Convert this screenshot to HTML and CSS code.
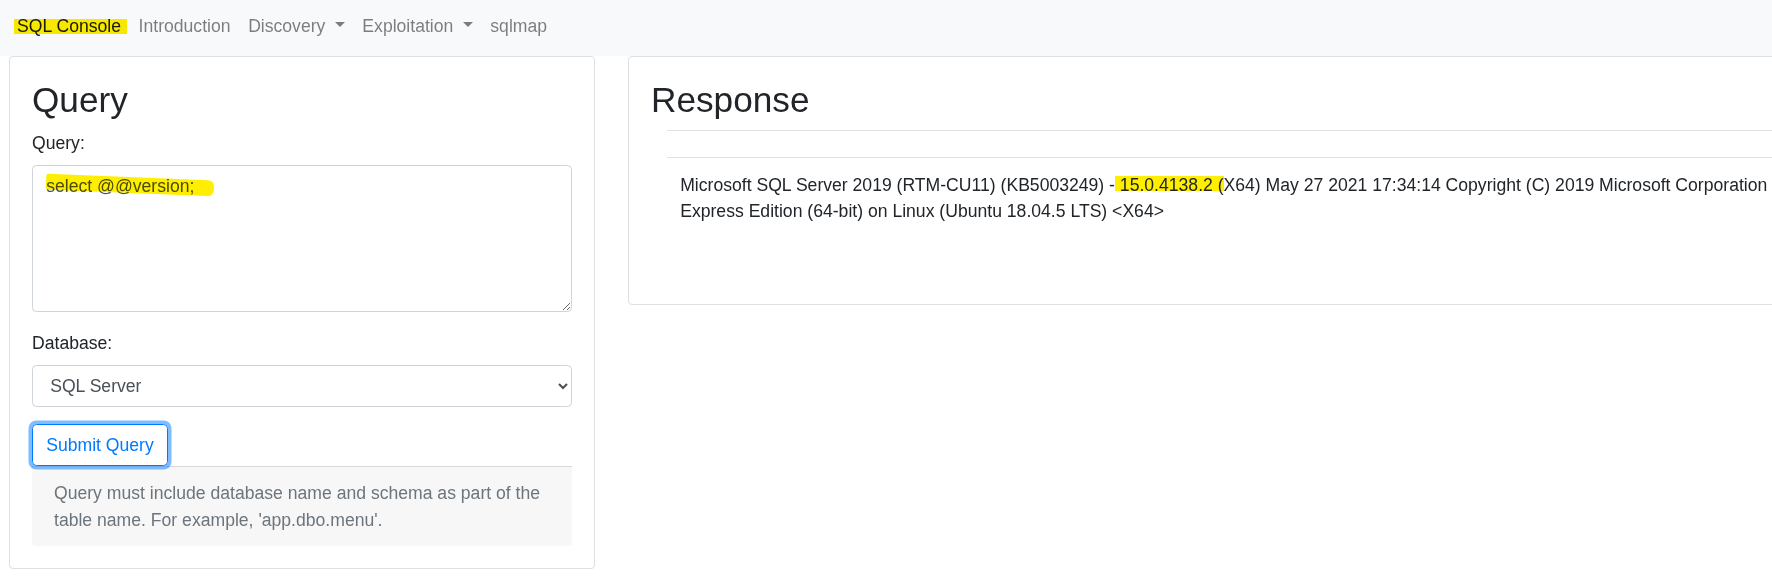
FILE: index.html
```html
<!DOCTYPE html>
<html lang="en">
<head>
<meta charset="utf-8">
<title>SQL Console</title>
<link rel="stylesheet" href="styles.css">
</head>
<body>
<nav class="navbar">
  <ul class="nav">
    <li><a class="nav-link active" href="#"><span class="mark mark-nav">SQL Console</span></a></li>
    <li><a class="nav-link" href="#">Introduction</a></li>
    <li><a class="nav-link dropdown" href="#">Discovery</a></li>
    <li><a class="nav-link dropdown" href="#">Exploitation</a></li>
    <li><a class="nav-link" href="#">sqlmap</a></li>
  </ul>
</nav>
<main class="row">
  <section class="card card-query">
    <h2>Query</h2>
    <div class="form-group">
      <label for="q">Query:</label>
      <div class="textarea-wrap">
        <textarea id="q" class="form-control textarea" rows="5">select @@version;</textarea>
        <span class="marker-stroke"></span>
      </div>
    </div>
    <div class="form-group">
      <label for="db">Database:</label>
      <select id="db" class="form-control select">
        <option>SQL Server</option>
        <option>MySQL</option>
        <option>PostgreSQL</option>
        <option>Oracle</option>
      </select>
    </div>
    <button class="btn" type="button">Submit Query</button>
    <div class="note">Query must include database name and schema as part of the table name. For example, 'app.dbo.menu'.</div>
  </section>
  <section class="card card-response">
    <h2>Response</h2>
    <div class="table-wrap">
      <table class="resp-table">
        <thead><tr><th></th></tr></thead>
        <tbody>
          <tr><td>Microsoft SQL Server 2019 (RTM-CU11) (KB5003249) -<span class="mark mark-resp"> 15.0.4138.2 (</span>X64) May 27 2021 17:34:14 Copyright (C) 2019 Microsoft Corporation Express Edition (64-bit) on Linux (Ubuntu 18.04.5 LTS) &lt;X64&gt;</td></tr>
        </tbody>
      </table>
    </div>
  </section>
</main>
</body>
</html>
```

FILE: styles.css
```css
* {
  box-sizing: border-box;
}

html,
body {
  margin: 0;
  overflow: hidden;
}

body {
  font-family: "Liberation Sans", Arial, Helvetica, sans-serif;
  font-size: 17.6px;
  line-height: 26.4px;
  color: #212529;
  background: #fff;
}

/* ---------- navbar ---------- */
.navbar {
  height: 56px;
  background: #f8f9fa;
  padding: 4.2px 0 0 8.2px;
}

.nav {
  display: flex;
  list-style: none;
  margin: 0;
  padding: 0;
}

.nav-link {
  display: block;
  padding: 8.8px;
  color: rgba(0, 0, 0, 0.5);
  text-decoration: none;
}

.nav-link.active {
  color: rgba(0, 0, 0, 0.9);
}

.dropdown::after {
  content: "";
  display: inline-block;
  margin-left: 9.4px;
  vertical-align: 4.5px;
  border-top: 5.28px solid;
  border-right: 5.28px solid transparent;
  border-left: 5.28px solid transparent;
  border-bottom: 0;
}

.mark {
  mix-blend-mode: multiply;
}

.mark-nav {
  margin-left: -3px;
  padding: 0 6px 0 3px;
  margin-right: -6px;
  background: linear-gradient(transparent 14%, #ffee00 14%, #ffee00 92%, transparent 92%);
}

.mark-resp {
  background: linear-gradient(transparent 6%, #ffee00 6%, #ffee00 78%, transparent 78%);
}

/* ---------- layout ---------- */
.row {
  display: flex;
  align-items: flex-start;
  gap: 33px;
  padding-left: 9px;
}

.card {
  flex: none;
  border: 1px solid rgba(0, 0, 0, 0.125);
  border-radius: 4.4px;
  padding: 22px;
  background: #fff;
}

.card-query {
  width: 586px;
}

.card-response {
  width: 1205px;
}

h2 {
  font-size: 35.2px;
  font-weight: 500;
  line-height: 1.2;
  margin: 0 0 8.8px;
}

/* ---------- form ---------- */
.form-group {
  margin-bottom: 17.6px;
}

label {
  display: block;
  margin-bottom: 8.8px;
}

.form-control {
  display: block;
  width: 100%;
  font-family: inherit;
  font-size: 17.6px;
  line-height: 26.4px;
  color: #495057;
  background-color: #fff;
  border: 1px solid #ced4da;
  border-radius: 4.4px;
  padding: 6.6px 13.2px;
}

.textarea {
  height: 147.2px;
  resize: vertical;
  margin: 0;
}

.textarea-wrap {
  position: relative;
}

.marker-stroke {
  position: absolute;
  left: 14px;
  top: 12px;
  width: 168px;
  height: 16px;
  background: #ffee00;
  mix-blend-mode: multiply;
  transform: rotate(2.3deg);
  border-radius: 2px 6px 6px 2px;
  pointer-events: none;
}

.select {
  height: 41.6px;
}

.btn {
  display: block;
  position: relative;
  z-index: 1;
  font-family: inherit;
  font-size: 17.6px;
  line-height: 26.4px;
  padding: 6.6px 13.2px;
  color: #007bff;
  background: transparent;
  border: 1px solid #007bff;
  border-radius: 4.4px;
  box-shadow: 0 0 0 3.52px rgba(0, 123, 255, 0.5);
}

.note {
  background: rgba(0, 0, 0, 0.03);
  border-top: 1px solid rgba(0, 0, 0, 0.125);
  border-radius: 0 0 3.4px 3.4px;
  padding: 13.2px 22px;
  color: #6c757d;
}

/* ---------- response ---------- */
.table-wrap {
  padding-left: 16px;
}

.resp-table {
  width: 100%;
  border-collapse: collapse;
  margin-bottom: 44px;
}

.resp-table th,
.resp-table td {
  padding: 13.2px;
  border-top: 1px solid #dee2e6;
  text-align: left;
  vertical-align: top;
  font-weight: 400;
}
```
